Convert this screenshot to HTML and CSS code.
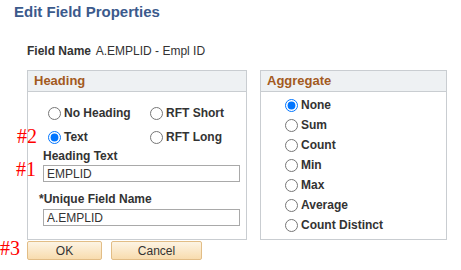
FILE: index.html
```html
<!DOCTYPE html>
<html lang="en">
  <head>
    <meta charset="UTF-8" />
    <title>Edit Field Properties</title>
    <link rel="stylesheet" href="styles.css">
  </head>
  <body>
    <h1 class="title">Edit Field Properties</h1>

    <div class="field-name">
      <span class="field-label">Field Name</span>
      <span class="field-value">A.EMPLID - Empl ID</span>
    </div>

    <div class="groups">
      <div class="group heading-group">
        <div class="group-header">Heading</div>
        <div class="heading-body">
          <div class="radio-grid">
            <label class="radio"><input type="radio" name="heading"> No Heading</label>
            <label class="radio"><input type="radio" name="heading"> RFT Short</label>
            <label class="radio"><input type="radio" name="heading" checked> Text</label>
            <label class="radio"><input type="radio" name="heading"> RFT Long</label>
          </div>
          <div class="label">Heading Text</div>
          <input class="text-input" type="text" value="EMPLID">
          <div class="label required">*Unique Field Name</div>
          <input class="text-input" type="text" value="A.EMPLID">
        </div>
      </div>

      <div class="group agg-group">
        <div class="group-header">Aggregate</div>
        <div class="agg-body">
          <label class="radio"><input type="radio" name="agg" checked> None</label>
          <label class="radio"><input type="radio" name="agg"> Sum</label>
          <label class="radio"><input type="radio" name="agg"> Count</label>
          <label class="radio"><input type="radio" name="agg"> Min</label>
          <label class="radio"><input type="radio" name="agg"> Max</label>
          <label class="radio"><input type="radio" name="agg"> Average</label>
          <label class="radio"><input type="radio" name="agg"> Count Distinct</label>
        </div>
      </div>
    </div>

    <div class="buttons">
      <button class="btn btn-ok">OK</button>
      <button class="btn btn-cancel">Cancel</button>
    </div>

    <!-- annotation marks drawn over the screenshot -->
    <span class="mark mark-2">#2</span>
    <span class="mark mark-1">#1</span>
    <span class="mark mark-3">#3</span>
  </body>
</html>
```

FILE: styles.css
```css
body {
  font-family: Arial, "Liberation Sans", sans-serif;
  margin: 0;
  padding: 0;
  background: #fff;
  color: #333;
  position: relative;
  width: 461px;
  height: 270px;
  overflow: hidden;
}
.title {
  font-size: 15px;
  line-height: 18px;
  font-weight: bold;
  color: #3b5a8c;
  margin: 3px 0 0 14px;
}
.field-name {
  margin-top: 23px;
  padding-left: 27px;
  font-size: 12px;
  line-height: 14px;
  height: 14px;
}
.field-label {
  font-weight: bold;
  margin-right: 2px;
}
.groups {
  display: flex;
  gap: 13px;
  margin-top: 12px;
  padding-left: 27px;
}
.group {
  border: 1px solid #c9cdd1;
  box-sizing: border-box;
  height: 170px;
}
.heading-group {
  width: 220px;
}
.agg-group {
  width: 187px;
}
.group-header {
  background: #eef1f3;
  border-bottom: 1px solid #c9cdd1;
  height: 20px;
  line-height: 20px;
  padding-left: 6px;
  font-size: 13px;
  font-weight: bold;
  color: #a35a1e;
}
.radio {
  display: flex;
  align-items: center;
  font-size: 12px;
  font-weight: bold;
  color: #333;
  white-space: nowrap;
}
.radio input {
  margin: 0 3px 0 0;
  width: 13px;
  height: 13px;
}
.heading-body {
  padding: 9px 0 0 0;
}
.radio-grid {
  display: grid;
  grid-template-columns: 102px 90px;
  grid-auto-rows: 24px;
  padding-left: 20px;
}
.label {
  font-size: 12px;
  line-height: 14px;
  font-weight: bold;
  margin-left: 15px;
}
.label.required {
  margin-left: 11px;
  margin-top: 10px;
  margin-bottom: 3px;
}
.text-input {
  display: block;
  box-sizing: border-box;
  width: 197px;
  height: 17px;
  margin: 2px 0 0 15px;
  padding: 0 3px;
  border: 1px solid #a9a9a9;
  font-family: Arial, "Liberation Sans", sans-serif;
  font-size: 12px;
  color: #333;
}
.label.required + .text-input {
  margin-top: 0;
}
.agg-body {
  padding: 3px 0 0 24px;
}
.agg-body .radio {
  height: 20px;
}
.buttons {
  display: flex;
  gap: 9px;
  margin-top: 1px;
  padding-left: 27px;
}
.btn {
  height: 19px;
  box-sizing: border-box;
  border: 1px solid #e2bd86;
  border-radius: 2px;
  background: linear-gradient(#fdf4e4, #f8dcae);
  font-family: Arial, "Liberation Sans", sans-serif;
  font-size: 12px;
  color: #333;
  padding: 0;
}
.btn-ok {
  width: 75px;
}
.btn-cancel {
  width: 91px;
}
.mark {
  position: absolute;
  font-family: "Liberation Serif", "Times New Roman", serif;
  font-size: 20px;
  line-height: 20px;
  color: #f00;
}
.mark-2 {
  left: 17px;
  top: 126px;
}
.mark-1 {
  left: 16px;
  top: 159px;
}
.mark-3 {
  left: 0;
  top: 238px;
}
```
